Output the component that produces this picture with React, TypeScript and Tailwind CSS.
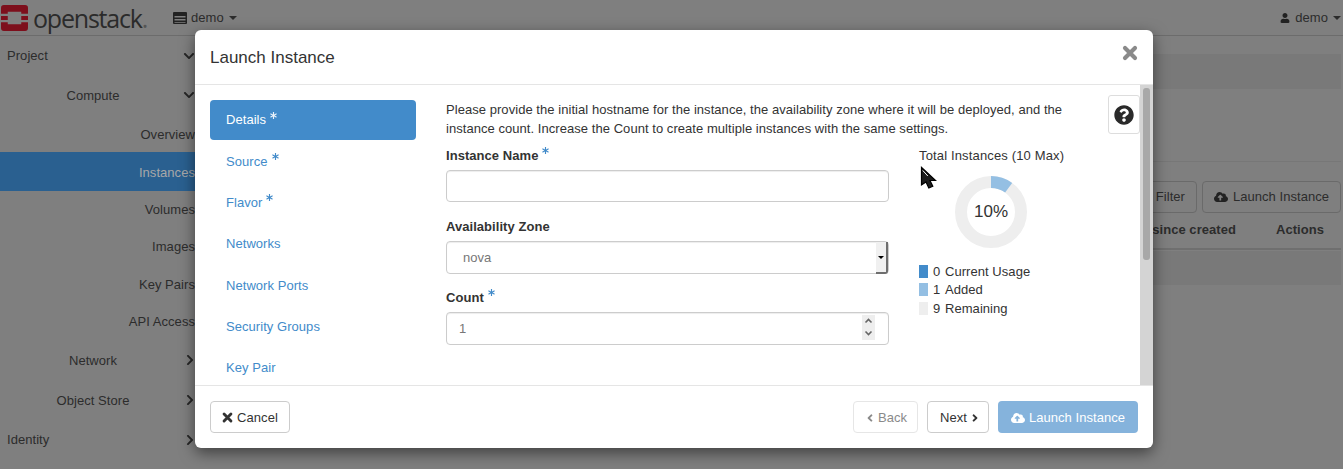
import React from "react";
import { FaAngleLeft, FaAngleRight, FaAsterisk, FaChevronDown, FaChevronRight, FaCloudUploadAlt, FaQuestionCircle, FaUser } from "react-icons/fa";

const Star = ({ white }: { white?: boolean }) => (
  <FaAsterisk className={`relative top-[-5px] ml-[4px] text-[7px] ${white ? "text-[#eaf2fa]" : "text-[#428bca]"}`} />
);

const XIcon = ({ cls }: { cls: string }) => (
  <svg viewBox="0 0 16 16" className={cls} aria-hidden="true">
    <path d="M3 3l10 10M13 3L3 13" fill="none" stroke="currentColor" strokeWidth="4.2" strokeLinecap="round" />
  </svg>
);

function SideRow({ label, active, cls }: { label: string; active?: boolean; cls: string }) {
  return (
    <div className={`flex shrink-0 items-center justify-end ${cls} ${active ? "bg-[#2a6090] text-[#a8a8a8]" : "text-[#2c2c2c]"}`}>
      <span>{label}</span>
    </div>
  );
}

function TopSide({ label, open, group, cls }: { label: string; open?: boolean; group?: boolean; cls: string }) {
  return (
    <div className={`relative flex shrink-0 items-center text-[#2c2c2c] ${cls}`}>
      {group ? <span className="w-[186px] text-center">{label}</span> : <span className="pl-[7px]">{label}</span>}
      {open ? (
        <FaChevronDown className="absolute left-[183px] top-1/2 -translate-y-1/2 text-[12px] text-[#262626]" />
      ) : (
        <FaChevronRight className="absolute left-[184px] top-1/2 -translate-y-1/2 text-[12px] text-[#262626]" />
      )}
    </div>
  );
}

function Sidebar() {
  return (
    <aside className="flex w-[195px] shrink-0 flex-col overflow-hidden">
      <TopSide label="Project" open cls="h-[39px]" />
      <TopSide label="Compute" open group cls="h-[40px] pt-[2px]" />
      <SideRow label="Overview" cls="h-[37px] pt-[2px]" />
      <SideRow label="Instances" active cls="h-[39px] pt-[2px]" />
      <SideRow label="Volumes" cls="h-[37px]" />
      <SideRow label="Images" cls="h-[37px]" />
      <SideRow label="Key Pairs" cls="h-[38px] pt-[2px]" />
      <SideRow label="API Access" cls="h-[37px]" />
      <TopSide label="Network" group cls="h-[40px] pt-[2px]" />
      <TopSide label="Object Store" group cls="h-[40px] pt-[2px]" />
      <TopSide label="Identity" cls="h-[39px]" />
    </aside>
  );
}

function NavBar() {
  return (
    <header className="flex h-[36px] shrink-0 items-center border-b border-[#6c6c6c] text-[#2c2c2c]">
      <svg width="27" height="26" viewBox="0 0 28 27" className="ml-[1px]" aria-hidden="true">
        <path fill="#7d0f1c" d="M3 0h22a3 3 0 0 1 3 3v6h-7V7H7v2H0V3a3 3 0 0 1 3-3zM0 11.5h7v4H0zM21 11.5h7v4h-7zM0 18h7v2h14v-2h7v6a3 3 0 0 1-3 3H3a3 3 0 0 1-3-3z" />
      </svg>
      <span className="ml-[5px] w-[115px] py-[2px] text-[25px] font-medium leading-[30px] tracking-[-1.2px] text-[#2b2b2b] [font-family:'Open_Sans',sans-serif]">openstack<span className="text-[#555]">.</span></span>
      <div className="ml-[25px] flex items-center">
        <svg width="14" height="12" viewBox="0 0 14 12" aria-hidden="true">
          <path fill="#222" d="M1 0h12a1 1 0 0 1 1 1v10a1 1 0 0 1-1 1H1a1 1 0 0 1-1-1V1a1 1 0 0 1 1-1z" />
          <path fill="#7f7f7f" d="M1.500 4h11v1.500h-11zM1.500 7h11v1.500h-11zM1.500 10h11v.8h-11z" />
        </svg>
        <span className="ml-[4px]">demo</span>
        <span className="ml-[5px] mt-[1px] h-0 w-0 border-x-[4px] border-t-[4px] border-x-transparent border-t-[#2c2c2c]" />
      </div>
      <div className="ml-auto mr-[2px] flex items-center">
        <FaUser className="text-[10px] text-[#222]" />
        <span className="ml-[5px]">demo</span>
        <span className="ml-[5px] mt-[1px] h-0 w-0 border-x-[4px] border-t-[4px] border-x-transparent border-t-[#2c2c2c]" />
      </div>
    </header>
  );
}

function PageMain() {
  return (
    <main className="flex min-w-0 flex-1 flex-col pr-[2px] text-[#2c2c2c]">
      <div className="mt-[18px] h-[35px] bg-[#797979]" />
      <div className="mt-[72px] h-px bg-[#777]" />
      <div className="mt-[19px] flex justify-end gap-[5px]">
        <div className="flex h-[32px] w-[100px] items-center justify-end rounded-[4px] border border-[#6a6a6a] pr-[11px]">Filter</div>
        <div className="flex h-[32px] w-[139px] items-center justify-center gap-[5px] rounded-[4px] border border-[#6a6a6a]"><FaCloudUploadAlt className="text-[14px] text-[#222]" />Launch Instance</div>
      </div>
      <div className="mt-[8px] flex h-[29px] items-center justify-end gap-[40px] border-b-[2px] border-[#6f6f6f] pb-[9px] pr-[17px] font-bold">
        <span>since created</span>
        <span>Actions</span>
      </div>
      <div className="mt-[1px] h-[34px] bg-[#797979]" />
    </main>
  );
}

function Field({ label, star, top, children }: { label: string; star?: boolean; top: string; children: React.ReactNode }) {
  return (
    <div className={top}>
      <div className="flex h-[17px] items-center font-bold text-[#333]">{label}{star && <Star />}</div>
      {children}
    </div>
  );
}

function Donut() {
  const c = 2 * Math.PI * 30;
  return (
    <div className="relative ml-[36px] mt-[12px] h-[72px] w-[72px]">
      <svg width="72" height="72" viewBox="0 0 72 72" aria-hidden="true">
        <circle cx="36" cy="36" r="30" fill="none" stroke="#eeeeee" strokeWidth="12" />
        <circle cx="36" cy="36" r="30" fill="none" stroke="#94bfe3" strokeWidth="12" strokeDasharray={`${c * 0.1} ${c}`} transform="rotate(-90 36 36)" />
      </svg>
      <div className="absolute inset-0 flex items-center justify-center text-[17px] font-light text-[#333]">10%</div>
    </div>
  );
}

function Legend({ color, n, label }: { color: string; n: number; label: string }) {
  return (
    <div className="flex h-[18.5px] items-center text-[#333]">
      <span className={`h-[13px] w-[9px] ${color}`} />
      <span className="ml-[5px] w-[12px]">{n}</span>
      <span>{label}</span>
    </div>
  );
}

function Modal() {
  const steps = ["Source", "Flavor", "Networks", "Network Ports", "Security Groups", "Key Pair"];
  const inputShadow = "shadow-[inset_0_1px_1px_rgba(0,0,0,0.075)]";
  return (
    <div className="absolute left-[195px] top-[30px] flex h-[418px] w-[958px] flex-col overflow-hidden rounded-[6px] bg-white shadow-[0_5px_15px_rgba(0,0,0,0.5)]">
      <div className="relative flex h-[55px] shrink-0 items-center border-b border-[#e5e5e5] px-[15px]">
        <h4 className="mt-[1px] text-[17px] font-normal tracking-normal text-[#333]">Launch Instance</h4>
        <XIcon cls="absolute right-[15px] top-[15px] h-[16px] w-[16px] text-[#8a8a8a]" />
      </div>
      <div className="relative flex h-[300px] shrink-0 overflow-hidden">
        <nav className="ml-[15px] flex w-[206px] shrink-0 flex-col gap-[2px] pt-[15px] text-[#428bca]">
          <div className="flex h-[40px] shrink-0 items-center rounded-[4px] bg-[#428bca] pl-[16px] text-white">
            Details<Star white />
          </div>
          {steps.map((s, i) => (
            <div key={s} className="flex h-[39.3px] shrink-0 items-center pl-[16px]">{s}{i < 2 && <Star />}</div>
          ))}
        </nav>
        <section className="relative min-w-0 flex-1 pl-[30px] pt-[15px] text-[#333]">
          <p className="leading-[19px]">Please provide the initial hostname for the instance, the availability zone where it will be deployed, and the<br />instance count. Increase the Count to create multiple instances with the same settings.</p>
          <div className="mt-[9px] flex">
            <div className="w-[443px] shrink-0">
              <Field label="Instance Name" star top="">
                <div className={`mt-[6px] h-[32px] rounded-[4px] border border-[#cccccc] ${inputShadow}`} />
              </Field>
              <Field label="Availability Zone" top="mt-[16px]">
                <div className={`relative mt-[6px] flex h-[33px] items-center rounded-[4px] border border-[#cccccc] pl-[16px] text-[#777] ${inputShadow}`}>
                  nova
                  <span className="absolute right-0 top-0 flex h-[32px] w-[12px] items-center justify-center rounded-br-[3px] border-b-[2px] border-r-[2px] border-[#6e6e6e] bg-[#f0f0f0]">
                    <span className="h-0 w-0 border-x-[3px] border-t-[3px] border-x-transparent border-t-black" />
                  </span>
                </div>
              </Field>
              <Field label="Count" star top="mt-[15px]">
                <div className={`relative mt-[6px] flex h-[33px] items-center rounded-[4px] border border-[#cccccc] pl-[12px] text-[#777] ${inputShadow}`}>
                  1
                  <span className="absolute right-[13px] top-[2px] flex h-[25px] w-[13px] flex-col bg-[#eeeeee]">
                    <svg viewBox="0 0 12 12" className="h-[12px] w-[13px]" aria-hidden="true"><path d="M3 7.500 6 4.500l3 3" fill="none" stroke="#666" strokeWidth="1.600" /></svg>
                    <svg viewBox="0 0 12 12" className="h-[12px] w-[13px]" aria-hidden="true"><path d="M3 4.500 6 7.500l3-3" fill="none" stroke="#666" strokeWidth="1.600" /></svg>
                  </span>
                </div>
              </Field>
            </div>
            <div className="ml-[30px] w-[170px]">
              <div className="flex h-[17px] items-center tracking-[0.15px]">Total Instances (10 Max)</div>
              <Donut />
              <div className="mt-[14px]">
                <Legend color="bg-[#428bca]" n={0} label="Current Usage" />
                <Legend color="bg-[#94bfe3]" n={1} label="Added" />
                <Legend color="bg-[#eeeeee]" n={9} label="Remaining" />
              </div>
            </div>
          </div>
          <div className="absolute right-0 top-[10px] flex h-[39px] w-[32px] items-center justify-center rounded-[3px] border border-[#dddddd] bg-white">
            <FaQuestionCircle className="text-[20px] text-[#2a2a2a]" />
          </div>
        </section>
        <div className="w-[13px] shrink-0 bg-[#d4d4d4] px-[3px] pt-[3px]">
          <div className="h-[172px] rounded-[3px] bg-[#a8a8a8]" />
        </div>
      </div>
      <div className="flex flex-1 items-start justify-between border-t border-[#e5e5e5] px-[15px] pt-[15px]">
        <button className="flex h-[32px] w-[80px] items-center justify-center gap-[4px] rounded-[4px] border border-[#cccccc] pt-[1px] text-[#333]"><XIcon cls="h-[11px] w-[11px]" />Cancel</button>
        <div className="flex gap-[9px]">
          <button className="flex h-[32px] w-[65px] items-center justify-center gap-[2px] rounded-[4px] border border-[#e6e6e6] pt-[1px] text-[#8a8a8a]"><FaAngleLeft className="text-[12px]" />Back</button>
          <button className="flex h-[32px] w-[62px] items-center gap-[2px] rounded-[4px] border border-[#cccccc] pl-[12px] pt-[1px] text-[#333]">Next<FaAngleRight className="text-[12px]" /></button>
          <button className="flex h-[32px] w-[140px] items-center justify-center gap-[4px] rounded-[4px] bg-[#85b3dc] pt-[1px] text-white"><FaCloudUploadAlt className="text-[14px]" />Launch Instance</button>
        </div>
      </div>
    </div>
  );
}

function Cursor() {
  return (
    <svg width="17" height="24" viewBox="0 0 17 24" className="absolute left-[920px] top-[166px]" aria-hidden="true">
      <path d="M1.500 1.500v17.500l4.500-3 2.800 6 4-1.800-2.800-5.700h5.500z" fill="#1c1c1c" stroke="#000" strokeWidth="1.200" />
      <path d="M2.800 4.500l5 5.500" fill="none" stroke="#fff" strokeWidth="1" />
    </svg>
  );
}

export default function App() {
  return (
    <div className="relative h-[469px] w-[1343px] overflow-hidden bg-[#7f7f7f] text-[13px] tracking-[0.05px] [font-family:'Liberation_Sans',Arial,sans-serif]">
      <NavBar />
      <div className="flex">
        <Sidebar />
        <PageMain />
      </div>
      <Modal />
      <Cursor />
    </div>
  );
}
